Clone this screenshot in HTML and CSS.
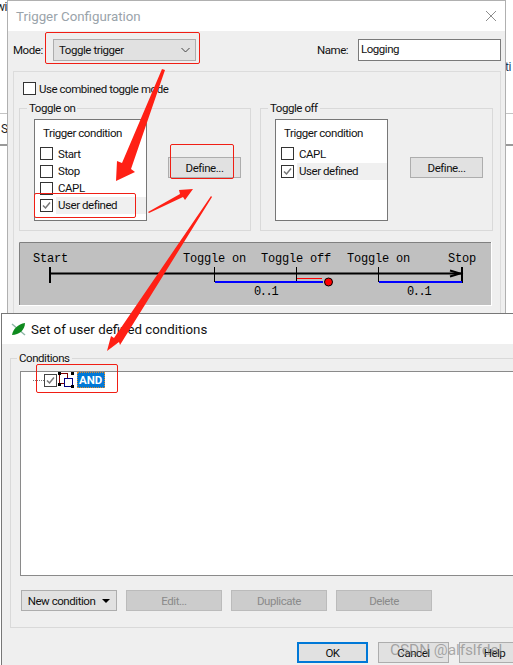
FILE: index.html
```html
<!DOCTYPE html>
<html>
<head>
	<meta charset="UTF-8">
	<title>Trigger Configuration</title>
	<link rel="stylesheet" href="styles.css">
</head>
<body>
<div class="desk">
	<div class="back back-left">
		<span class="back-text back-wi">wi</span>
		<span class="back-text back-s">S</span>
	</div>
	<div class="back back-right">
		<span class="back-text back-ti">ti</span>
	</div>

	<div class="win win-trigger">
		<div class="titlebar">
			<span class="title title-off">Trigger Configuration</span>
			<svg class="close" width="12" height="12" viewBox="0 0 12 12"><path d="M1 1l10 10M11 1L1 11" stroke="#8d8d8d" fill="none"/></svg>
		</div>
		<div class="body">
			<div class="mode-row">
				<span class="mode-label">Mode:</span>
				<div class="select">Toggle trigger
					<svg width="9" height="6" viewBox="0 0 9 6"><path d="M.5 1l4 4 4-4" stroke="#444" fill="none"/></svg>
				</div>
				<span class="name-label">Name:</span>
				<div class="input">Logging</div>
			</div>
			<div class="frame">
				<div class="check-row combined"><span class="box"></span>Use combined toggle mode</div>
				<div class="groups">
					<fieldset class="group">
						<legend>Toggle on</legend>
						<div class="list">
							<div class="list-head">Trigger condition</div>
							<div class="check-row item"><span class="box"></span>Start</div>
							<div class="check-row item"><span class="box"></span>Stop</div>
							<div class="check-row item"><span class="box"></span>CAPL</div>
							<div class="check-row item on"><span class="box"><svg width="11" height="11" viewBox="0 0 11 11"><path d="M2 5.5l2.5 2.5 4.5-5.5" stroke="#777" stroke-width="1.5" fill="none"/></svg></span><span class="item-text">User defined</span></div>
						</div>
						<div class="btn define">Define...</div>
					</fieldset>
					<fieldset class="group group-off">
						<legend>Toggle off</legend>
						<div class="list">
							<div class="list-head">Trigger condition</div>
							<div class="check-row item"><span class="box"></span>CAPL</div>
							<div class="check-row item on"><span class="box"><svg width="11" height="11" viewBox="0 0 11 11"><path d="M2 5.5l2.5 2.5 4.5-5.5" stroke="#777" stroke-width="1.5" fill="none"/></svg></span><span class="item-text">User defined</span></div>
						</div>
						<div class="btn define">Define...</div>
					</fieldset>
				</div>
				<svg class="timeline" width="473" height="64" viewBox="19 242 473 64">
					<rect x="19.5" y="242.5" width="472" height="63" fill="#c0c0c0" stroke="#fff"/>
					<path d="M19.5 305V242.5H491" stroke="#808080" fill="none"/>
					<g class="tl-text">
						<text x="33" y="262">Start</text>
						<text x="183" y="262">Toggle on</text>
						<text x="261" y="262">Toggle off</text>
						<text x="347" y="262">Toggle on</text>
						<text x="448" y="262">Stop</text>
						<text class="tl-count" x="254" y="295">0..1</text>
						<text class="tl-count" x="407" y="295">0..1</text>
					</g>
					<path d="M50 273.5H461" stroke="#000" stroke-width="2"/>
					<path d="M50 267v16" stroke="#000" stroke-width="2"/>
					<path d="M214.5 267v15M296.5 267v15M378.5 267v15" stroke="#000"/>
					<path d="M462 267v16" stroke="#000" stroke-width="2"/>
					<path d="M450 270.5l10 3-10 3" stroke="#000" stroke-width="2" fill="none"/>
					<path d="M215 282H323M379 282H462" stroke="#0000ff" stroke-width="2"/>
					<path d="M297 278.5H322" stroke="#ff0000"/>
					<circle cx="328.5" cy="282" r="4" fill="#ff0000" stroke="#000"/>
				</svg>
			</div>
		</div>
	</div>

	<div class="win win-set">
		<div class="titlebar titlebar-set">
			<svg class="leaf" width="15" height="15" viewBox="0 0 15 15">
				<path d="M1 2l13 11" stroke="#8fb8a8" stroke-width="1.5"/>
				<path d="M1 13C2 7 7 2 14 1 14 8 8 13 1 13z" fill="#0f8a1e"/>
			</svg>
			<span class="title">Set of user defined conditions</span>
		</div>
		<div class="body">
			<fieldset class="group group-set">
				<legend>Conditions</legend>
				<div class="tree">
					<div class="tree-row">
						<span class="tree-dots"></span>
						<span class="box tree-box"><svg width="11" height="11" viewBox="0 0 11 11"><path d="M2 5.5l2.5 2.5 4.5-5.5" stroke="#777" stroke-width="1.5" fill="none"/></svg></span>
						<svg class="and-icon" width="16" height="16" viewBox="0 0 16 16">
							<rect x="1.5" y="1.5" width="8" height="10" fill="#fff" stroke="#800000"/>
							<rect x="6.5" y="6.5" width="8" height="8" fill="#fff" stroke="#000080"/>
							<path d="M0 0h3v3H0zM13 0h3v3h-3zM0 11h3v3H0zM13 13h3v3h-3z" fill="#000"/>
						</svg>
						<span class="tree-label">AND</span>
					</div>
				</div>
				<div class="tool-row">
					<div class="btn tool">New condition<svg width="8" height="4" viewBox="0 0 8 4"><path d="M0 0h8L4 4z" fill="#000"/></svg></div>
					<div class="btn tool off">Edit...</div>
					<div class="btn tool off">Duplicate</div>
					<div class="btn tool off">Delete</div>
				</div>
			</fieldset>
			<div class="foot-row">
				<div class="btn foot default">OK</div>
				<div class="btn foot">Cancel</div>
				<div class="btn foot">Help</div>
			</div>
		</div>
	</div>

	<div class="mark mark-select"></div>
	<div class="mark mark-define"></div>
	<div class="mark mark-user"></div>
	<div class="mark mark-and"></div>
	<svg class="arrows" width="513" height="665" viewBox="0 0 513 665">
		<path d="M162 69l3 1-34 99 4 3-19 9 1-20 5 2 40-94z" fill="#ff2015"/>
		<path d="M148 212l32-18-1-4 14-1-8 11-2-3-34 16z" fill="#ff2015"/>
		<path d="M211 196l1 1-92 148-1-3-12 9 4-15 3 2 97-142z" fill="#ff2015"/>
	</svg>
	<div class="watermark">CSDN @alfslfdel</div>
</div>
</body>
</html>
```
FILE: styles.css
```css
html,body{margin:0;padding:0;background:#fff;}
body{font:11.5px Roboto,"Liberation Sans",sans-serif;letter-spacing:-.45px;color:#111;}
.desk{position:relative;width:513px;height:665px;overflow:hidden;}

.back{position:absolute;top:0;height:313px;background:#fff;}
.back-left{left:0;width:7px;}
.back-right{left:505px;width:8px;}
.back-left:before,.back-right:before{content:"";position:absolute;left:0;right:0;top:113px;height:1px;background:#c4c4c4;}
.back-left:after,.back-right:after{content:"";position:absolute;left:0;right:0;top:144px;height:2px;background:#999;}
.back-text{position:absolute;font-size:12px;color:#222;}
.back-wi{left:-4px;top:0;}
.back-s{left:1px;top:122px;}
.back-ti{left:0;top:60px;color:#1b3c5a;}

.win{position:absolute;box-sizing:border-box;background:#efefef;border:1px solid #8b8b8b;}
.win-trigger{left:7px;top:0;width:499px;height:320px;border-color:#b0b0b0;}
.win-set{left:1px;top:313px;width:530px;height:360px;border-color:#777;}

.titlebar{display:flex;align-items:center;height:30px;padding-left:8px;background:#fff;}
.titlebar-set{height:30px;padding-left:9px;}
.title{font-size:13.3px;letter-spacing:0;color:#111;}
.title-off{color:#9aa3aa;}
.close{margin-left:auto;margin-right:8px;}
.leaf{margin-right:5px;}

.mode-row{display:flex;align-items:center;padding:7px 0 0 5px;height:23px;}
.mode-label{width:40px;}
.select{box-sizing:border-box;display:flex;align-items:center;justify-content:space-between;width:143px;height:22px;padding:0 5px;background:#e1e1e1;border:1px solid #adadad;}
.name-label{margin-left:121px;width:41px;}
.input{box-sizing:border-box;width:143px;height:22px;padding:0 2px;line-height:19px;background:#fff;border:1px solid #7a7a7a;}

.frame{box-sizing:border-box;margin:10px 0 0 5px;width:488px;height:260px;padding:9px 5px 0;border:1px solid #dcdcdc;}
.check-row{display:flex;align-items:center;}
.combined{height:15px;margin-left:4px;gap:3px;}
.box{box-sizing:border-box;display:block;flex:none;width:13px;height:13px;background:#fff;border:1px solid #333;}
.box svg{display:block;margin:0;}

.groups{display:flex;gap:9px;margin-top:4px;}
.group{display:block;box-sizing:border-box;margin:0;padding:0;border:1px solid #d9d9d9;min-width:0;}
.group legend{margin-left:7px;padding:0 2px;line-height:16px;}
.groups .group{display:flex;align-items:flex-start;width:232px;height:131px;padding:3px 9px 0 14px;}
.groups .group legend{margin-left:-7px;}
.groups .group-off{width:233px;}
.list{box-sizing:border-box;width:113px;height:102px;background:#fff;border:1px solid #777;padding:5px 0 0 5px;}
.list-head{height:17px;line-height:16px;margin:0 0 3px 3px;}
.item{height:17.4px;gap:5px;}
.item.on .item-text{flex:1;height:17px;line-height:17px;background:#f0f0f0;margin-left:-2px;padding-left:2px;}
.btn{box-sizing:border-box;display:flex;align-items:center;justify-content:center;height:21px;background:#e1e1e1;border:1px solid #adadad;white-space:nowrap;}
.define{width:73px;margin:38px 0 0 auto;}

.timeline{display:block;margin:11px 0 0;}
.tl-text{font:12px "Liberation Mono",monospace;letter-spacing:-.2px;fill:#000;}
.tl-count{letter-spacing:-1.4px;}

.group-set{margin:7px -20px 0 8px;height:277px;}
.group-set legend{margin-left:6px;line-height:14px;}
.tree{box-sizing:border-box;height:205px;margin:6px 0 0 9px;background:#fff;border:1px solid #8a8a8a;padding:0 0 0 12px;}
.tree-row{display:flex;align-items:center;height:16px;}
.tree-dots{width:11px;border-top:1px dotted #777;}
.tree-box{border-color:#444;}
.and-icon{margin:0 3px 0 1px;}
.tree-label{box-sizing:border-box;height:16px;width:28px;padding:0 1px;line-height:14px;font-weight:700;letter-spacing:0;color:#fff;background:#0078d7;border:1px dotted #e08a2a;}
.tool-row{display:flex;gap:9px;margin:14px 0 0 10px;}
.tool{width:96px;}
.tool svg{margin-left:7px;}
.tool.off{color:#8a8a8a;background:#cccccc;border-color:#bbb;}
.foot-row{display:flex;gap:10px;margin:14px 0 0 295px;}
.foot{width:73px;}
.foot.default{border:2px solid #0078d7;}

.mark{position:absolute;box-sizing:border-box;border:1px solid #f01e14;border-radius:2px;}
.mark-select{left:45px;top:32px;width:155px;height:32px;}
.mark-define{left:170px;top:144px;width:64px;height:35px;}
.mark-user{left:34px;top:193px;width:102px;height:25px;}
.mark-and{left:36px;top:364px;width:82px;height:29px;}
.arrows{position:absolute;left:0;top:0;}
.watermark{position:absolute;left:390px;top:641px;font-size:15.5px;letter-spacing:-.1px;color:rgba(120,120,120,.6);white-space:nowrap;}
```
